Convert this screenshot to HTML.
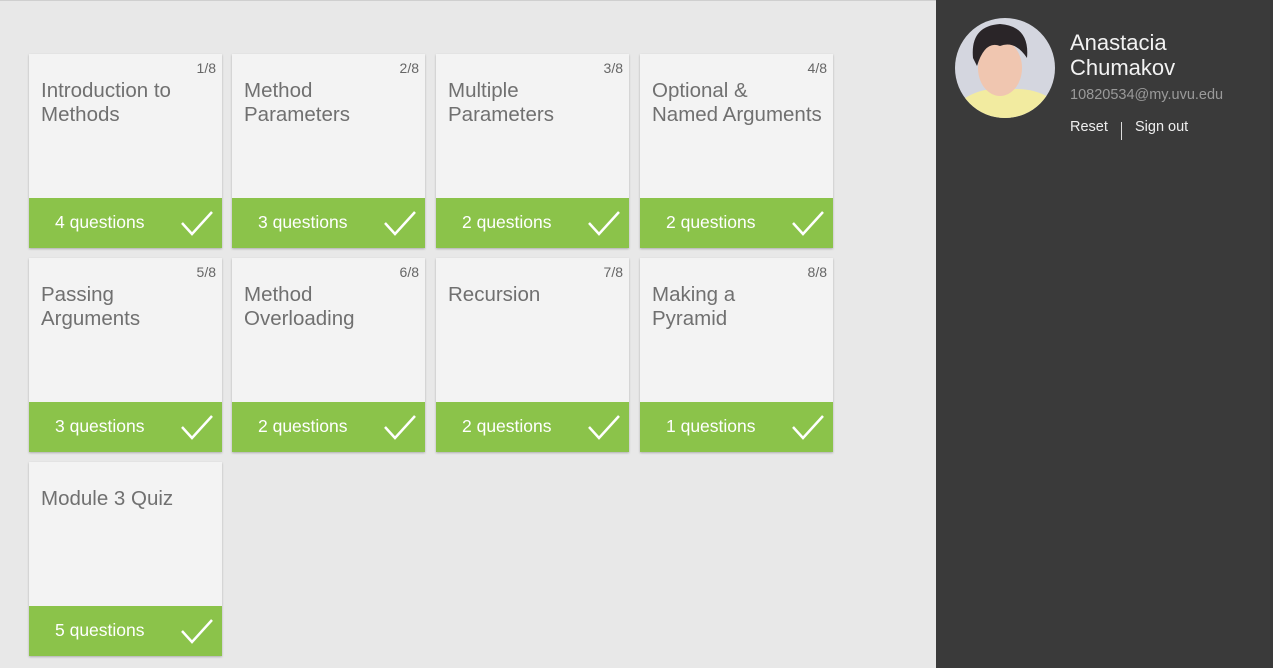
<!DOCTYPE html>
<html><head><style>
*{margin:0;padding:0;box-sizing:border-box}
body{width:1273px;height:668px;background:#e8e8e8;font-family:"Liberation Sans",sans-serif;position:relative;overflow:hidden}
.top{position:absolute;left:0;top:0;width:936px;height:1px;background:#cfcfcf}
.card{position:absolute;width:193px;height:194px;background:#f3f3f3;box-shadow:0 1px 2px rgba(0,0,0,.25)}
.n{position:absolute;right:6px;top:6px;font-size:14px;color:#666}
.t{position:absolute;left:12px;top:25px;font-size:20.5px;line-height:24px;color:#707070}
.g{position:absolute;left:0;bottom:0;width:193px;height:50px;background:#8bc34a;color:#fff;font-size:17.5px}
.g span{position:absolute;left:26px;top:14px}
.g svg{position:absolute;right:8px;top:12px}
.side{position:absolute;left:936px;top:0;width:337px;height:668px;background:#3a3a3a}
</style></head><body>
<div class="top"></div>
<div class="card" style="left:29px;top:54px"><div class="n">1/8</div><div class="t">Introduction to<br>Methods</div><div class="g"><span>4 questions</span><svg width="34" height="26"><path d="M2 13 L12 24 L32 2" stroke="#fff" stroke-width="2.5" fill="none"/></svg></div></div>
<div class="card" style="left:232px;top:54px"><div class="n">2/8</div><div class="t">Method<br>Parameters</div><div class="g"><span>3 questions</span><svg width="34" height="26"><path d="M2 13 L12 24 L32 2" stroke="#fff" stroke-width="2.5" fill="none"/></svg></div></div>
<div class="card" style="left:436px;top:54px"><div class="n">3/8</div><div class="t">Multiple<br>Parameters</div><div class="g"><span>2 questions</span><svg width="34" height="26"><path d="M2 13 L12 24 L32 2" stroke="#fff" stroke-width="2.5" fill="none"/></svg></div></div>
<div class="card" style="left:640px;top:54px"><div class="n">4/8</div><div class="t">Optional &amp;<br>Named Arguments</div><div class="g"><span>2 questions</span><svg width="34" height="26"><path d="M2 13 L12 24 L32 2" stroke="#fff" stroke-width="2.5" fill="none"/></svg></div></div>
<div class="card" style="left:29px;top:258px"><div class="n">5/8</div><div class="t">Passing<br>Arguments</div><div class="g"><span>3 questions</span><svg width="34" height="26"><path d="M2 13 L12 24 L32 2" stroke="#fff" stroke-width="2.5" fill="none"/></svg></div></div>
<div class="card" style="left:232px;top:258px"><div class="n">6/8</div><div class="t">Method<br>Overloading</div><div class="g"><span>2 questions</span><svg width="34" height="26"><path d="M2 13 L12 24 L32 2" stroke="#fff" stroke-width="2.5" fill="none"/></svg></div></div>
<div class="card" style="left:436px;top:258px"><div class="n">7/8</div><div class="t">Recursion</div><div class="g"><span>2 questions</span><svg width="34" height="26"><path d="M2 13 L12 24 L32 2" stroke="#fff" stroke-width="2.5" fill="none"/></svg></div></div>
<div class="card" style="left:640px;top:258px"><div class="n">8/8</div><div class="t">Making a<br>Pyramid</div><div class="g"><span>1 questions</span><svg width="34" height="26"><path d="M2 13 L12 24 L32 2" stroke="#fff" stroke-width="2.5" fill="none"/></svg></div></div>
<div class="card" style="left:29px;top:462px"><div class="t">Module 3 Quiz</div><div class="g"><span>5 questions</span><svg width="34" height="26"><path d="M2 13 L12 24 L32 2" stroke="#fff" stroke-width="2.5" fill="none"/></svg></div></div>
<div class="side">
<svg style="position:absolute;left:19px;top:18px" width="100" height="100" viewBox="0 0 100 100">
<defs><clipPath id="c"><circle cx="50" cy="50" r="50"/></clipPath></defs>
<g clip-path="url(#c)">
<rect width="100" height="100" fill="#d4d6df"/>
<path d="M0 100 L10 80 Q30 68 50 72 Q75 68 95 80 L100 100Z" fill="#f2eba0"/>
<ellipse cx="45" cy="50" rx="22" ry="28" fill="#f0c6b0"/>
<path d="M18 40 Q15 8 45 6 Q75 8 72 40 Q60 22 45 28 Q30 22 22 48Z" fill="#2a2528"/>
</g></svg>
<div style="position:absolute;left:134px;top:30px;font-size:22px;line-height:25px;color:#f2f2f2">Anastacia<br>Chumakov</div>
<div style="position:absolute;left:134px;top:87px;font-size:14.5px;color:#9a9a9a">10820534@my.uvu.edu</div>
<div style="position:absolute;left:134px;top:119px;font-size:14.5px;color:#eee">Reset</div>
<div style="position:absolute;left:185px;top:122px;width:1px;height:18px;background:#ddd"></div>
<div style="position:absolute;left:199px;top:119px;font-size:14.5px;color:#eee">Sign out</div>
</div>
</body></html>
